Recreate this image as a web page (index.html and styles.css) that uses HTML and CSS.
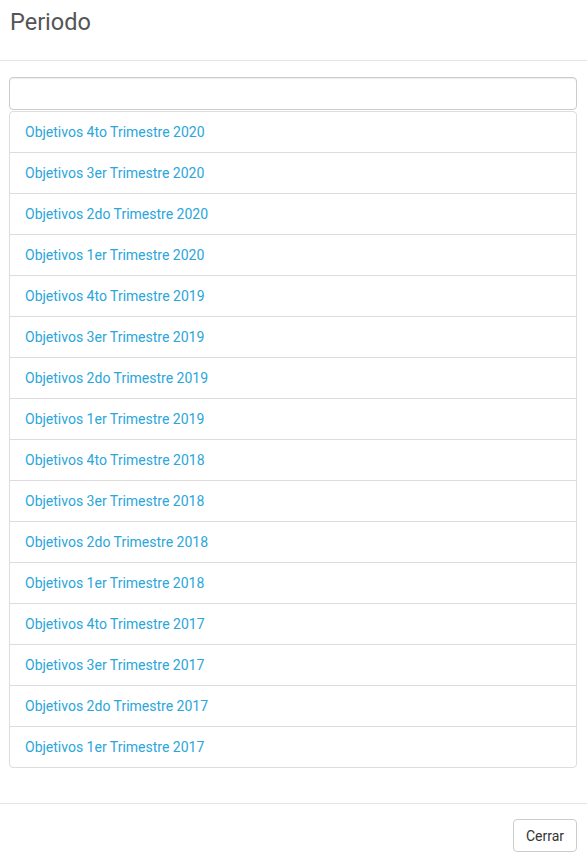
FILE: index.html
```html
<!DOCTYPE html>
<html>
<head>
<meta charset="utf-8">
<link rel="stylesheet" href="styles.css">
</head>
<body>
<div class="modal">
  <div class="modal-header">
    <h4 class="modal-title">Periodo</h4>
  </div>
  <div class="modal-body">
    <input class="form-control" type="text">
    <div class="list-group">
      <a class="list-group-item" href="#">Objetivos 4to Trimestre 2020</a>
      <a class="list-group-item" href="#">Objetivos 3er Trimestre 2020</a>
      <a class="list-group-item" href="#">Objetivos 2do Trimestre 2020</a>
      <a class="list-group-item" href="#">Objetivos 1er Trimestre 2020</a>
      <a class="list-group-item" href="#">Objetivos 4to Trimestre 2019</a>
      <a class="list-group-item" href="#">Objetivos 3er Trimestre 2019</a>
      <a class="list-group-item" href="#">Objetivos 2do Trimestre 2019</a>
      <a class="list-group-item" href="#">Objetivos 1er Trimestre 2019</a>
      <a class="list-group-item" href="#">Objetivos 4to Trimestre 2018</a>
      <a class="list-group-item" href="#">Objetivos 3er Trimestre 2018</a>
      <a class="list-group-item" href="#">Objetivos 2do Trimestre 2018</a>
      <a class="list-group-item" href="#">Objetivos 1er Trimestre 2018</a>
      <a class="list-group-item" href="#">Objetivos 4to Trimestre 2017</a>
      <a class="list-group-item" href="#">Objetivos 3er Trimestre 2017</a>
      <a class="list-group-item" href="#">Objetivos 2do Trimestre 2017</a>
      <a class="list-group-item" href="#">Objetivos 1er Trimestre 2017</a>
    </div>
  </div>
  <div class="modal-footer">
    <button class="btn" type="button">Cerrar</button>
  </div>
</div>
</body>
</html>
```
FILE: styles.css
```css
* { box-sizing: border-box; }
html, body { margin: 0; padding: 0; background: #fff; }
body {
  font-family: Roboto, "Liberation Sans", sans-serif;
  font-size: 14px;
  line-height: 20px;
  color: #333;
}
.modal { width: 587px; }
.modal-header {
  height: 61px;
  padding: 7px 10px 0 10px;
  border-bottom: 1px solid #e5e5e5;
}
.modal-title {
  margin: 0;
  font-size: 23.5px;
  font-weight: 400;
  line-height: 30px;
  color: #555;
}
.modal-body {
  padding: 16px 10px 35px 9px;
}
.form-control {
  display: block;
  width: 100%;
  height: 33px;
  margin: 0;
  padding: 6px 12px;
  border: 1px solid #ccc;
  border-radius: 4px;
  box-shadow: inset 0 1px 1px rgba(0,0,0,0.075);
  font: inherit;
  outline: none;
}
.list-group {
  display: flex;
  flex-direction: column;
  margin-top: 1px;
}
.list-group-item {
  display: block;
  padding: 10px 15px;
  border: 1px solid #ddd;
  margin-bottom: -1px;
  color: #2aa6db;
  text-decoration: none;
  line-height: 20px;
}
.list-group-item:first-child { border-top-left-radius: 4px; border-top-right-radius: 4px; }
.list-group-item:last-child { margin-bottom: 0; border-bottom-left-radius: 4px; border-bottom-right-radius: 4px; }
.modal-footer {
  border-top: 1px solid #e5e5e5;
  padding: 15px 10px 5px 10px;
  display: flex;
  justify-content: flex-end;
}
.btn {
  height: 33px;
  padding: 6px 12px;
  border: 1px solid #ccc;
  border-radius: 4px;
  background: #fff;
  color: #333;
  font: inherit;
  font-size: 14px;
  line-height: 20px;
}
```
